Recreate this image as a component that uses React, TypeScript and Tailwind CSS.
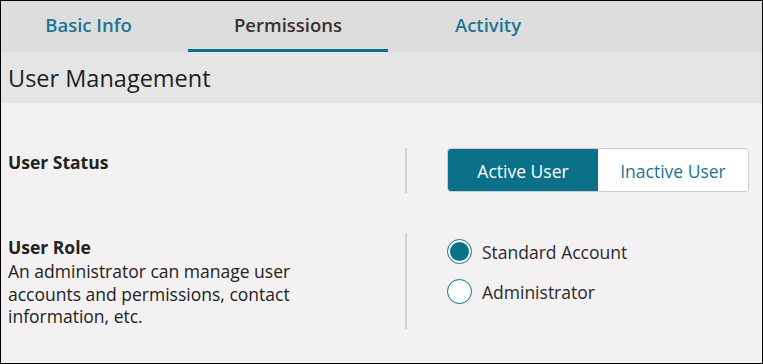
import { useState } from "react";

const tabs = ["Basic Info", "Permissions", "Activity"];

export default function App() {
  const [tab, setTab] = useState("Permissions");
  const [status, setStatus] = useState("active");
  const [role, setRole] = useState("standard");

  return (
    <div className="w-[763px] h-[364px] border border-black bg-[#f3f1f2] font-['Open_Sans',sans-serif] text-[#222222] flex flex-col overflow-hidden">
      {/* tabs */}
      <div className="h-[51px] bg-[#dddddd] flex shrink-0">
        {tabs.map((t, i) => (
          <button
            key={t}
            onClick={() => setTab(t)}
            className={
              "h-full flex items-center justify-center text-[18.5px] font-semibold border-b-[3px] pb-[1px] " +
              (i === 0 ? "w-[187px] pr-[12px] " : "w-[200px] ") +
              (tab === t ? "border-[#0b7089] text-[#3b2f2f]" : "border-transparent text-[#1c7590]")
            }
          >
            {t}
          </button>
        ))}
      </div>

      {/* section header */}
      <div className="h-[51px] bg-[#e6e5e6] flex items-center px-[7px] pt-[2px] shrink-0">
        <h2 className="text-[23.5px] text-[#1e1e1e]">User Management</h2>
      </div>

      {/* body */}
      <div className="flex flex-col gap-[40px] pt-[45px]">
        <div className="flex">
          <div className="w-[404px] pl-[7px] pt-[2px]">
            <div className="text-[17.5px] font-bold leading-[24px]">User Status</div>
          </div>
          <div className="w-[2px] h-[45px] bg-[#d3d1d2]" />
          <div className="pl-[40px]">
            <div className="flex h-[44px] rounded-[4px] overflow-hidden border border-[#cccccc]">
              <button
                onClick={() => setStatus("active")}
                className={
                  "w-[150px] pt-[2px] text-[17.5px] " +
                  (status === "active" ? "bg-[#0b7089] text-white" : "bg-white text-[#1c7590]")
                }
              >
                Active User
              </button>
              <button
                onClick={() => setStatus("inactive")}
                className={
                  "w-[150px] pt-[2px] text-[17.5px] " +
                  (status === "inactive" ? "bg-[#0b7089] text-white" : "bg-white text-[#1c7590]")
                }
              >
                Inactive User
              </button>
            </div>
          </div>
        </div>

        <div className="flex">
          <div className="w-[404px] pl-[7px] pt-[1px]">
            <div className="text-[17.5px] font-bold leading-[26px]">User Role</div>
            <p className="text-[17.5px] leading-[22.5px] w-[300px]">
              An administrator can manage user accounts and permissions, contact information, etc.
            </p>
          </div>
          <div className="w-[2px] h-[96px] bg-[#d3d1d2]" />
          <div className="pl-[40px] pt-[6px] flex flex-col gap-[15px]">
            {[
              ["standard", "Standard Account"],
              ["admin", "Administrator"],
            ].map(([v, label]) => (
              <label key={v} className="flex items-center gap-[10px] cursor-pointer" onClick={() => setRole(v)}>
                <span className="w-[25px] h-[25px] rounded-full border-[1.5px] border-[#0b7089] bg-white flex items-center justify-center">
                  {role === v && <span className="w-[19px] h-[19px] rounded-full bg-[#0b7089]" />}
                </span>
                <span className="text-[17.5px] leading-[24px] text-[#2a2a2a]">{label}</span>
              </label>
            ))}
          </div>
        </div>
      </div>
    </div>
  );
}
